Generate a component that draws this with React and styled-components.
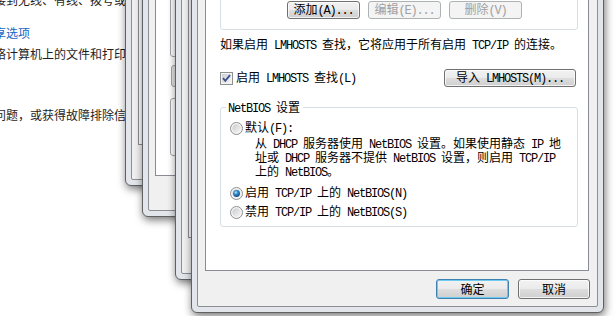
import React from "react";
import styled, { createGlobalStyle } from "styled-components";

const Global = createGlobalStyle`
  html, body { margin: 0; padding: 0; background: #fff; }
  body { font-family: "Noto Sans CJK SC", sans-serif; }
`;

const Screen = styled.div`
  position: relative;
  width: 615px;
  height: 316px;
  overflow: hidden;
  background: #fff;
`;

// 뒤쪽 제어판 페이지
const Page = styled.div`
  display: flex;
  flex-direction: column;
  margin: -8px 0 0 -90px;
  font: 12px/16px "Noto Sans CJK SC", sans-serif;
  color: #1e1e1e;
  white-space: nowrap;
`;

const PageLine = styled.div`
  margin-top: ${(p) => p.$gap || 0}px;
  color: ${(p) => (p.$link ? "#1a64c4" : "#1e1e1e")};
`;

// 창 틀
const Win = styled.div`
  position: absolute;
  left: ${(p) => p.$x}px;
  top: ${(p) => p.$y}px;
  width: ${(p) => p.$w}px;
  height: ${(p) => p.$h}px;
  box-sizing: border-box;
  display: flex;
  padding: 5px;
  border: 1px solid #5f6165;
  border-radius: 0 0 6px 6px;
  background: #e2e5e9;
  box-shadow: 1px 3px 9px rgba(0, 0, 0, 0.55);
`;

const Client = styled.div`
  flex: 1;
  display: flex;
  flex-direction: column;
  min-width: 0;
  border: 1px solid #8b8e93;
  border-radius: 0 0 2px 2px;
  background: #f0f0f0;
`;

const TabPage = styled.div`
  flex: 1;
  display: flex;
  flex-direction: column;
  justify-content: flex-end;
  margin: 0 ${(p) => p.$mr || 8}px ${(p) => p.$mb || 0}px ${(p) => p.$ml || 6}px;
  padding: 0 ${(p) => p.$pr || 0}px ${(p) => p.$pb || 0}px ${(p) => p.$pl || 0}px;
  background: #fff;
  border: 1px solid #898c95;
  border-top: none;
  font: 12px/14px "Noto Sans CJK SC", sans-serif;
  color: #000;
`;

const Stub = styled.div`
  flex: ${(p) => (p.$grow ? 1 : "none")};
  margin-left: ${(p) => p.$ml}px;
  height: ${(p) => (p.$h ? `${p.$h}px` : "auto")};
  width: ${(p) => p.$w}px;
  margin-bottom: ${(p) => p.$mb || 0}px;
  border: 1px solid #a3a6ab;
  border-radius: 3px;
  background: ${(p) => p.$bg || "#fff"};
`;

const Lat = styled.span`
  font-family: "Liberation Mono", monospace;
  font-size: 12px;
  letter-spacing: -1.2px;
`;

const mix = (s) =>
  s
    .split(/([\x20-\x7e]+)/)
    .map((part, i) =>
      /^[\x20-\x7e]+$/.test(part) ? <Lat key={i}>{part}</Lat> : part
    );

const Btn = styled.button`
  box-sizing: border-box;
  width: ${(p) => p.$w}px;
  height: ${(p) => p.$h || 20}px;
  padding: 0;
  margin: 0;
  border: 1px solid
    ${(p) => (p.$primary ? "#3c7fb1" : p.disabled ? "#adb2b5" : "#707070")};
  border-radius: 3px;
  background: ${(p) =>
    p.disabled
      ? "#f4f4f4"
      : "linear-gradient(#f2f2f2 0%, #ebebeb 48%, #dddddd 52%, #cfcfcf 100%)"};
  box-shadow: ${(p) =>
    p.$primary
      ? "inset 0 0 0 1px #6fcaf0"
      : p.disabled
      ? "none"
      : "inset 0 0 0 1px rgba(255,255,255,0.75)"};
  color: ${(p) => (p.disabled ? "#a0a0a0" : "#000")};
  font: 12px/14px "Noto Sans CJK SC", sans-serif;
  white-space: nowrap;
`;

const WinsGroup = styled.div`
  display: flex;
  flex-direction: column;
  border: 1px solid #d5dfe5;
  border-radius: 3px;
  padding: 0 0 10px 0;
`;

const ListBox = styled.div`
  height: 70px;
  margin: 0 10px 8px 10px;
  border: 1px solid #828790;
  background: #fff;
`;

const BtnRow = styled.div`
  display: flex;
  gap: 8px;
  padding-left: ${(p) => p.$pl || 0}px;
`;

const Info = styled.div`
  margin-top: 7px;
  height: 14px;
  white-space: nowrap;
`;

const CheckRow = styled.div`
  display: flex;
  align-items: center;
  justify-content: space-between;
  margin-top: 18px;
  height: 18px;
  padding-right: 2px;
`;

const Label = styled.label`
  display: flex;
  align-items: center;
  gap: ${(p) => p.$gap || 3}px;
  height: 14px;
  white-space: nowrap;
`;

const GroupBox = styled.div`
  display: flex;
  flex-direction: column;
  margin-top: 20px;
  padding: 0 0 7px 9px;
  border: 1px solid #d5dfe5;
  border-radius: 3px;
`;

const GroupTitle = styled.div`
  align-self: flex-start;
  margin: -8px 0 0 -4px;
  padding: 0 3px 0 2px;
  background: #fff;
  white-space: nowrap;
`;

const Row = styled.div`
  margin-top: ${(p) => p.$gap}px;
`;

const Desc = styled.div`
  margin-top: 2px;
  padding-left: 25px;
  line-height: 12px;
  white-space: nowrap;
`;

const Footer = styled.div`
  display: flex;
  justify-content: flex-end;
  gap: 9px;
  margin-top: 8px;
  padding: 0 7px 7px 0;
`;

const CheckBox = () => (
  <svg width="13" height="13" viewBox="0 0 13 13">
    <defs>
      <linearGradient id="cbg" x1="0" y1="0" x2="1" y2="1">
        <stop offset="0" stopColor="#cbcfd5" />
        <stop offset="1" stopColor="#f6f6f6" />
      </linearGradient>
    </defs>
    <rect x="0.5" y="0.5" width="12" height="12" fill="#f4f4f4" stroke="#8e8f8f" />
    <rect x="2" y="2" width="9" height="9" fill="url(#cbg)" />
    <path d="M3 6.2 L5.3 8.8 L10 3.2" fill="none" stroke="#3f5189" strokeWidth="1.9" />
  </svg>
);

const Radio = ({ on }) => (
  <svg width="13" height="13" viewBox="0 0 13 13">
    <defs>
      <linearGradient id="rbg" x1="0" y1="0" x2="1" y2="1">
        <stop offset="0" stopColor="#c9cbce" />
        <stop offset="1" stopColor="#f7f7f7" />
      </linearGradient>
      <radialGradient id="rdot" cx="0.4" cy="0.35" r="0.7">
        <stop offset="0" stopColor="#b4e3fb" />
        <stop offset="0.45" stopColor="#2c87c8" />
        <stop offset="1" stopColor="#0f3d6e" />
      </radialGradient>
    </defs>
    <circle cx="6.5" cy="6.5" r="6" fill="#f4f4f4" stroke="#8e8f8f" />
    <circle cx="6.5" cy="6.5" r="4.2" fill="url(#rbg)" />
    {on && <circle cx="6.5" cy="6.5" r="3.4" fill="url(#rdot)" />}
  </svg>
);

export default function App() {
  return (
    <Screen>
      <Global />
      <Page>
        <PageLine>{"连接到或重新连接到无线、有线、拨号或 VPN 网络连接。"}</PageLine>
        <PageLine $link $gap={17}>选择家庭组和共享选项</PageLine>
        <PageLine $gap={5}>访问位于其他网络计算机上的文件和打印机，或更改共享设置。</PageLine>
        <PageLine $link $gap={24}>疑难解答</PageLine>
        <PageLine $gap={5}>诊断并修复网络问题，或获得故障排除信息。</PageLine>
      </Page>

      <Win $x={125} $y={-80} $w={250} $h={266}>
        <Client>
          <TabPage $ml={6} $mb={34} />
        </Client>
      </Win>

      <Win $x={142} $y={-80} $w={250} $h={297}>
        <Client>
          <TabPage $ml={6} $mb={34} $pb={19}>
            <Stub $grow $ml={14} $w={150} $mb={8} />
            <Stub $ml={15} $w={80} $h={20} $mb={11} $bg="#e6e6e6" />
            <Stub $ml={14} $w={150} $h={56} />
          </TabPage>
        </Client>
      </Win>

      <Win $x={175} $y={-80} $w={300} $h={360}>
        <Client>
          <TabPage $ml={6} $mb={35} />
        </Client>
      </Win>

      <Win $x={191} $y={-100} $w={413} $h={413}>
        <Client>
          <TabPage $ml={7} $mr={8} $pl={14} $pr={10} $pb={43}>
            <WinsGroup>
              <ListBox />
              <BtnRow $pl={66}>
                <Btn $w={73} $h={18}>{mix("添加(A)...")}</Btn>
                <Btn $w={73} $h={18} disabled>{mix("编辑(E)...")}</Btn>
                <Btn $w={73} $h={18} disabled>{mix("删除(V)")}</Btn>
              </BtnRow>
            </WinsGroup>
            <Info>{mix("如果启用 LMHOSTS 查找，它将应用于所有启用 TCP/IP 的连接。")}</Info>
            <CheckRow>
              <Label>
                <CheckBox />
                <span>{mix("启用 LMHOSTS 查找(L)")}</span>
              </Label>
              <Btn $w={132} $h={18}>{mix("导入 LMHOSTS(M)...")}</Btn>
            </CheckRow>
            <GroupBox>
              <GroupTitle>{mix("NetBIOS 设置")}</GroupTitle>
              <Row $gap={5}>
                <Label $gap={2}>
                  <Radio />
                  <span>{mix("默认(F):")}</span>
                </Label>
              </Row>
              <Desc>
                {mix("从 DHCP 服务器使用 NetBIOS 设置。如果使用静态 IP 地")}
                <br />
                {mix("址或 DHCP 服务器不提供 NetBIOS 设置，则启用 TCP/IP")}
                <br />
                {mix("上的 NetBIOS。")}
              </Desc>
              <Row $gap={7}>
                <Label $gap={2}>
                  <Radio on />
                  <span>{mix("启用 TCP/IP 上的 NetBIOS(N)")}</span>
                </Label>
              </Row>
              <Row $gap={5}>
                <Label $gap={2}>
                  <Radio />
                  <span>{mix("禁用 TCP/IP 上的 NetBIOS(S)")}</span>
                </Label>
              </Row>
            </GroupBox>
          </TabPage>
          <Footer>
            <Btn $w={73} $primary>确定</Btn>
            <Btn $w={72}>取消</Btn>
          </Footer>
        </Client>
      </Win>
    </Screen>
  );
}
